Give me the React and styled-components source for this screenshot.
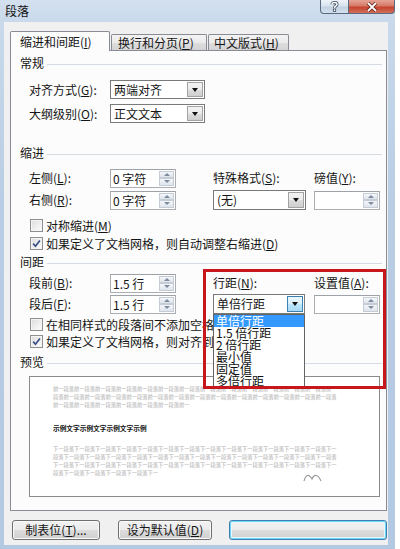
import React from 'react';
import styled, { createGlobalStyle } from 'styled-components';

const GlobalStyle = createGlobalStyle`
  html, body { margin: 0; padding: 0; background: #ffffff; }
  body {
    font-family: "Noto Sans CJK SC", "Noto Sans", sans-serif;
    font-size: 12px;
    color: #151515;
  }
  * { box-sizing: border-box; }
`;

const Window = styled.div`
  width: 395px;
  height: 549px;
  display: flex;
  flex-direction: column;
  background: linear-gradient(180deg, #d4e0ee 0px, #c9d9eb 22px, #b9cde4 200px, #b3c9e2 549px);
`;

const TitleBar = styled.div`
  height: 22px;
  flex: none;
  display: flex;
  justify-content: space-between;
  align-items: flex-start;
  padding-left: 5px;
`;

const TitleText = styled.div`
  height: 21px;
  line-height: 21px;
  font-size: 12px;
  color: #111;
`;

const CaptionGroup = styled.div`
  display: flex;
`;

const CaptionButton = styled.div`
  width: ${p => p.$w}px;
  height: 14px;
  display: flex;
  align-items: center;
  justify-content: center;
  border: 1px solid #5b6a80;
  border-top: none;
  background: ${p => p.$red
    ? 'linear-gradient(180deg, #e6a396 0%, #d67a68 45%, #c4432e 55%, #d4705a 100%)'
    : 'linear-gradient(180deg, #eef3f9 0%, #d9e3ee 45%, #c2d1e2 55%, #d4e0ee 100%)'};
  border-radius: ${p => p.$red ? '0 0 4px 0' : '0 0 0 4px'};
  border-left: ${p => p.$red ? 'none' : '1px solid #5b6a80'};
`;

const Frame = styled.div`
  flex: 1;
  display: flex;
  padding: 0 7px 4px 4px;
`;

const Client = styled.div`
  flex: 1;
  display: flex;
  flex-direction: column;
  background: #f0f0f0;
  padding: 9px 1px 5px 6px;
`;

const TabStrip = styled.div`
  height: 19px;
  display: flex;
  align-items: flex-end;
  position: relative;
  z-index: 2;
`;

const Tab = styled.div`
  width: ${p => p.$w}px;
  height: ${p => p.$active ? 20 : 16}px;
  margin-bottom: ${p => p.$active ? -1 : 0}px;
  margin-right: 1px;
  padding-left: ${p => p.$pad}px;
  border: 1px solid #898c95;
  border-bottom: none;
  border-radius: 2px 2px 0 0;
  background: ${p => p.$active ? '#fcfcfc' : 'linear-gradient(180deg, #f3f3f3 0%, #ebebeb 50%, #dedede 51%, #d4d4d4 100%)'};
  line-height: ${p => p.$active ? 19 : 15}px;
  font-size: 12px;
  white-space: nowrap;
`;

const Panel = styled.div`
  height: 461px;
  border: 1px solid #898c95;
  background: #fcfcfc;
  padding: 5px 4px 0 9px;
  display: flex;
  flex-direction: column;
  position: relative;
`;

const SectionHeader = styled.div`
  height: 14px;
  line-height: 14px;
  margin-top: ${p => p.$mt || 0}px;
  display: flex;
  align-items: center;
  white-space: nowrap;
  &::after {
    content: '';
    flex: 1;
    height: 1px;
    margin-left: 3px;
    margin-top: 2px;
    background: #d5dbe2;
  }
`;

const FieldRow = styled.div`
  display: grid;
  grid-template-columns: 81px auto;
  align-items: center;
  height: 19px;
  margin-top: ${p => p.$mt}px;
  margin-left: 9px;
`;

const FieldGrid = styled.div`
  display: grid;
  grid-template-columns: 81px 103px 101px 66px;
  grid-template-rows: 20px 20px;
  row-gap: ${p => p.$gap}px;
  align-items: center;
  margin-top: ${p => p.$mt}px;
  margin-left: 9px;
`;

const Label = styled.div`
  white-space: nowrap;
  line-height: 14px;
`;

const U = styled.span`
  text-decoration: underline;
  text-underline-offset: 1px;
`;

const SelectWrap = styled.div`
  position: relative;
  width: ${p => p.$w}px;
`;

const SelectBox = styled.div`
  width: 100%;
  height: ${p => p.$h || 19}px;
  border: 1px solid #7a7a7a;
  background: #ffffff;
  display: flex;
  align-items: stretch;
`;

const SelectText = styled.div`
  flex: 1;
  padding-left: 3px;
  line-height: ${p => (p.$h || 19) - 2}px;
  white-space: nowrap;
`;

const DropButton = styled.div`
  width: 16px;
  margin: 1px;
  border: 1px solid ${p => p.$hot ? '#3c7fb1' : '#a3a3a3'};
  background: ${p => p.$hot
    ? 'linear-gradient(180deg, #eaf6fd 0%, #d9f0fc 50%, #bee6fd 51%, #a7d9f5 100%)'
    : 'linear-gradient(180deg, #f2f2f2 0%, #ebebeb 50%, #dddddd 51%, #cfcfcf 100%)'};
  display: flex;
  align-items: center;
  justify-content: center;
  &::after {
    content: '';
    border-left: 3.5px solid transparent;
    border-right: 3.5px solid transparent;
    border-top: 4px solid #111;
  }
`;

const DropList = styled.div`
  position: absolute;
  left: 0;
  top: 100%;
  width: 100%;
  border: 1px solid #646464;
  background: #ffffff;
  z-index: 5;
`;

const DropItem = styled.div`
  height: 12px;
  line-height: 12px;
  padding-left: 2px;
  font-size: 12px;
  white-space: nowrap;
  background: ${p => p.$sel ? '#3399ff' : 'transparent'};
  color: ${p => p.$sel ? '#ffffff' : '#111'};
`;

const SpinBox = styled.div`
  width: 66px;
  height: 19px;
  border: 1px solid #abadb3;
  border-top-color: #9da1a8;
  background: #ffffff;
  display: flex;
`;

const SpinText = styled.div`
  flex: 1;
  padding-left: 2px;
  line-height: 17px;
  white-space: nowrap;
`;

const SpinButtons = styled.div`
  width: 15px;
  margin: 1px;
  display: flex;
  flex-direction: column;
`;

const SpinHalf = styled.div`
  flex: 1;
  border: 1px solid #c5ccd6;
  background: linear-gradient(180deg, #f4f6f9 0%, #dfe5ec 100%);
  display: flex;
  align-items: center;
  justify-content: center;
  &::after {
    content: '';
    border-left: 3px solid transparent;
    border-right: 3px solid transparent;
    ${p => p.$up ? 'border-bottom: 3px solid #7d8ba0;' : 'border-top: 3px solid #7d8ba0;'}
  }
`;

const CheckRow = styled.div`
  display: flex;
  align-items: center;
  gap: 3px;
  height: 16px;
  margin-top: ${p => p.$mt}px;
  margin-left: 10px;
  white-space: nowrap;
`;

const CheckBoxSquare = styled.div`
  width: 13px;
  height: 13px;
  flex: none;
  border: 1px solid #8f8f8f;
  background: linear-gradient(135deg, #dcdcdc 0%, #f0f0f0 60%, #fdfdfd 100%);
  box-shadow: inset 0 0 0 1px #f4f4f4;
  display: flex;
  align-items: center;
  justify-content: center;
`;

const PreviewBox = styled.div`
  width: 351px;
  height: 121px;
  margin-top: 7px;
  margin-left: 9px;
  border: 1px solid #8a8a8a;
  background: #ffffff;
  padding: 8px 0 0 23px;
  position: relative;
`;

const PreviewPara = styled.div`
  width: 284px;
  font-size: 5.25px;
  line-height: 8px;
  color: #adadad;
  word-break: break-all;
  margin-top: ${p => p.$mt || 0}px;
`;

const SampleLine = styled.div`
  margin-top: 15px;
  font-size: 6.7px;
  line-height: 8px;
  font-weight: 700;
  color: #111;
  white-space: nowrap;
`;

const Squiggle = styled.svg`
  position: absolute;
  left: 273px;
  top: 96px;
`;

const Highlight = styled.div`
  position: absolute;
  left: 192px;
  top: 218px;
  width: 183px;
  height: 120px;
  border: 3px solid #c8161d;
  z-index: 6;
  pointer-events: none;
`;

const ButtonRow = styled.div`
  display: flex;
  margin-top: 9px;
  padding-left: 2px;
`;

const Button = styled.div`
  width: ${p => p.$w}px;
  height: 20px;
  margin-right: ${p => p.$mr || 0}px;
  border: 1px solid ${p => p.$focus ? '#3c7fb1' : '#707070'};
  border-radius: 3px;
  background: linear-gradient(180deg, #f2f2f2 0%, #ebebeb 50%, #dddddd 51%, #cfcfcf 100%);
  box-shadow: ${p => p.$focus ? 'inset 0 0 0 1px #6fd6f7, inset 0 0 0 2px #e8f7fc' : 'inset 0 0 0 1px #fbfbfb'};
  text-align: center;
  line-height: 18px;
  white-space: nowrap;
`;

const Check = ({ on }) => (
  <CheckBoxSquare>
    {on && (
      <svg width="9" height="9" viewBox="0 0 9 9">
        <path d="M1.2 4.6 L3.5 7.2 L7.9 1.4" fill="none" stroke="#3b4f86" strokeWidth="1.7" strokeLinejoin="miter" />
      </svg>
    )}
  </CheckBoxSquare>
);

const Select = ({ w, text, hot, h, children }) => (
  <SelectWrap $w={w}>
    <SelectBox $h={h}>
      <SelectText $h={h}>{text}</SelectText>
      <DropButton $hot={hot} />
    </SelectBox>
    {children}
  </SelectWrap>
);

const Spin = ({ text }) => (
  <SpinBox>
    <SpinText>{text}</SpinText>
    <SpinButtons>
      <SpinHalf $up />
      <SpinHalf />
    </SpinButtons>
  </SpinBox>
);

const repeat = (unit, n) => {
  let s = '';
  while (s.length < n) s += unit;
  return s.slice(0, n);
};

const lineSpacingOptions = ['单倍行距', '1.5 倍行距', '2 倍行距', '最小值', '固定值', '多倍行距'];

export default function App() {
  return (
    <>
      <GlobalStyle />
      <Window>
        <TitleBar>
          <TitleText>段落</TitleText>
          <CaptionGroup>
            <CaptionButton $w={29}>
              <svg width="9" height="11" viewBox="0 0 9 11">
                <path d="M2 3.2 C2 1 7 1 7 3.4 C7 5 4.5 5 4.5 7" fill="none" stroke="#3d4a5c" strokeWidth="3" />
                <path d="M2 3.2 C2 1 7 1 7 3.4 C7 5 4.5 5 4.5 7" fill="none" stroke="#ffffff" strokeWidth="1.5" />
                <rect x="3.3" y="8" width="2.4" height="2.4" fill="#ffffff" stroke="#3d4a5c" strokeWidth="0.8" />
              </svg>
            </CaptionButton>
            <CaptionButton $w={46} $red>
              <svg width="12" height="10" viewBox="0 0 12 10">
                <path d="M2 1 L10 9 M10 1 L2 9" stroke="#5a1f17" strokeWidth="3.4" />
                <path d="M2 1 L10 9 M10 1 L2 9" stroke="#ffffff" strokeWidth="1.8" />
              </svg>
            </CaptionButton>
          </CaptionGroup>
        </TitleBar>
        <Frame>
          <Client>
            <TabStrip>
              <Tab $active $w={100} $pad={9}>缩进和间距(<U>I</U>)</Tab>
              <Tab $w={96} $pad={6}>换行和分页(<U>P</U>)</Tab>
              <Tab $w={81} $pad={5}>中文版式(<U>H</U>)</Tab>
            </TabStrip>
            <Panel>
              <SectionHeader>常规</SectionHeader>
              <FieldRow $mt={10}>
                <Label>对齐方式(<U>G</U>):</Label>
                <Select w={95} text="两端对齐" />
              </FieldRow>
              <FieldRow $mt={5}>
                <Label>大纲级别(<U>O</U>):</Label>
                <Select w={95} text="正文文本" />
              </FieldRow>

              <SectionHeader $mt={23}>缩进</SectionHeader>
              <FieldGrid $mt={8} $gap={2}>
                <Label>左侧(<U>L</U>):</Label>
                <Spin text="0 字符" />
                <Label>特殊格式(<U>S</U>):</Label>
                <Label>磅值(<U>Y</U>):</Label>
                <Label>右侧(<U>R</U>):</Label>
                <Spin text="0 字符" />
                <Select w={93} h={20} text="(无)" />
                <Spin text="" />
              </FieldGrid>
              <CheckRow $mt={7}>
                <Check />
                <span>对称缩进(<U>M</U>)</span>
              </CheckRow>
              <CheckRow $mt={2}>
                <Check on />
                <span>如果定义了文档网格，则自动调整右缩进(<U>D</U>)</span>
              </CheckRow>

              <SectionHeader $mt={4}>间距</SectionHeader>
              <FieldGrid $mt={4} $gap={1}>
                <Label>段前(<U>B</U>):</Label>
                <Spin text="1.5 行" />
                <Label>行距(<U>N</U>):</Label>
                <Label>设置值(<U>A</U>):</Label>
                <Label>段后(<U>F</U>):</Label>
                <Spin text="1.5 行" />
                <Select w={92} h={20} text="单倍行距" hot>
                  <DropList>
                    {lineSpacingOptions.map((o, i) => (
                      <DropItem key={o} $sel={i === 0}>{o}</DropItem>
                    ))}
                  </DropList>
                </Select>
                <Spin text="" />
              </FieldGrid>
              <CheckRow $mt={2}>
                <Check />
                <span>在相同样式的段落间不添加空格(<U>C</U>)</span>
              </CheckRow>
              <CheckRow $mt={1}>
                <Check on />
                <span>如果定义了文档网格，则对齐到网格(<U>W</U>)</span>
              </CheckRow>

              <SectionHeader $mt={6}>预览</SectionHeader>
              <PreviewBox>
                <PreviewPara>{repeat('前一段落', 134)}</PreviewPara>
                <SampleLine>{repeat('示例文字', 14)}</SampleLine>
                <PreviewPara $mt={13}>{repeat('下一段落', 182)}</PreviewPara>
                <Squiggle width="20" height="9" viewBox="0 0 20 9">
                  <path d="M1 8 C3 1 6 1 9 6 C11 1 15 1 18 8" fill="none" stroke="#9a9a9a" strokeWidth="1.2" />
                </Squiggle>
              </PreviewBox>
              <Highlight />
            </Panel>
            <ButtonRow>
              <Button $w={88} $mr={18}>制表位(<U>T</U>)...</Button>
              <Button $w={94} $mr={17}>设为默认值(<U>D</U>)</Button>
              <Button $w={158} $focus />
            </ButtonRow>
          </Client>
        </Frame>
      </Window>
    </>
  );
}
